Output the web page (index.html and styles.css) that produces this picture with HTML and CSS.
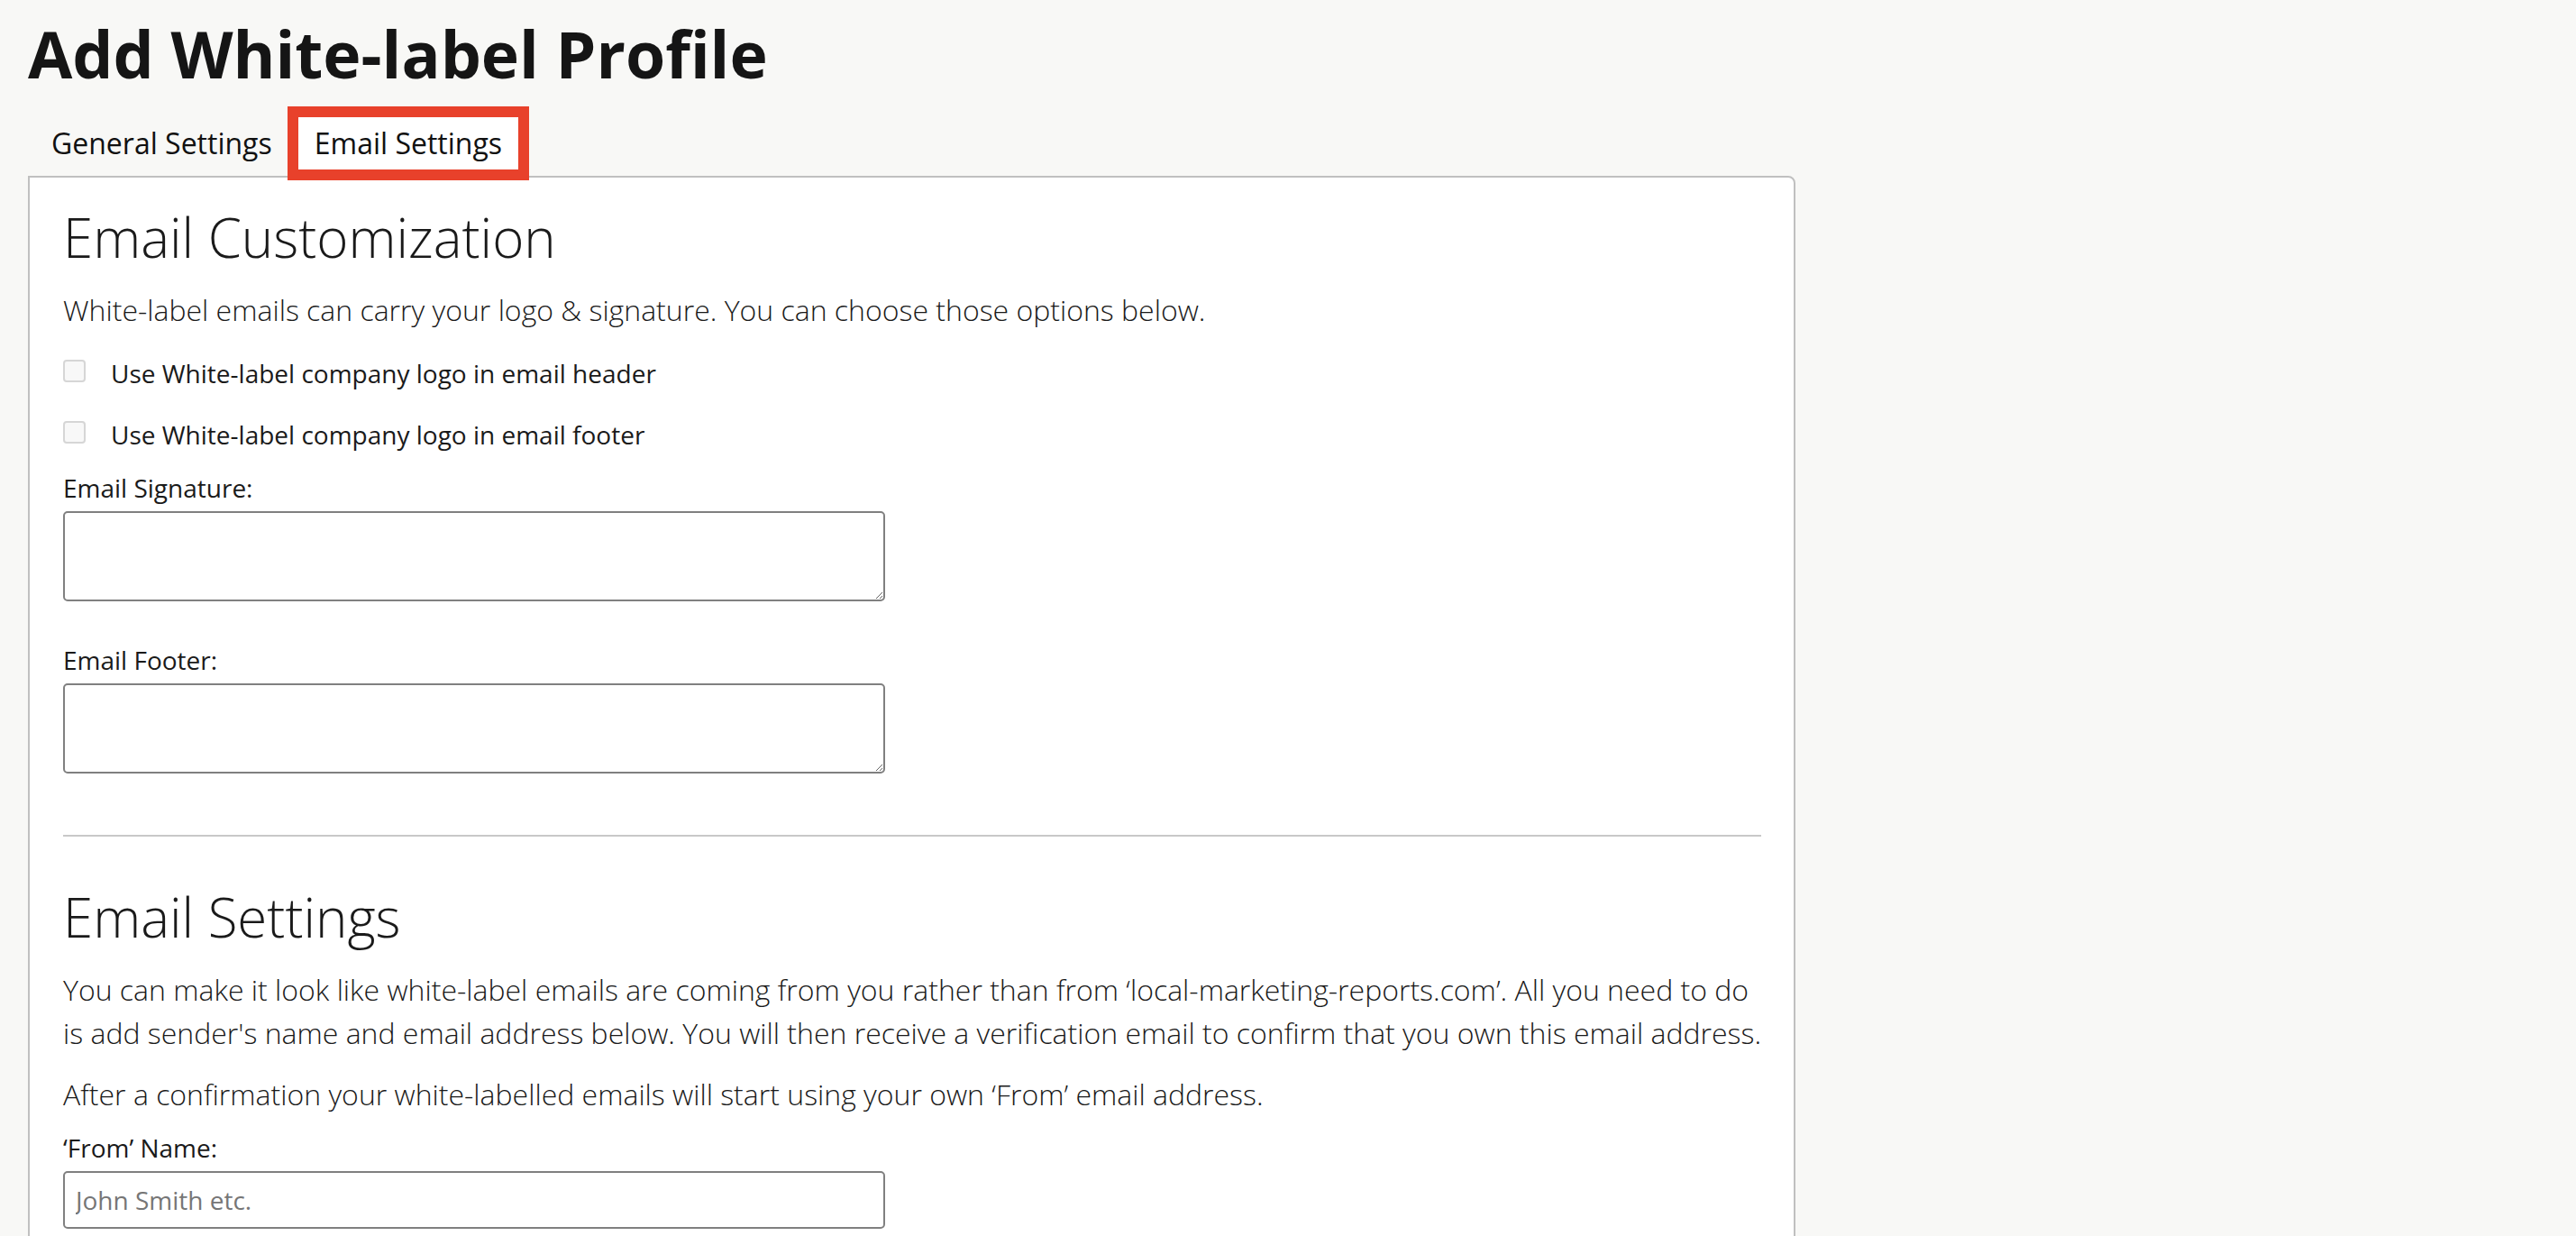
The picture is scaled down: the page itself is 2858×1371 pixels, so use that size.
FILE: index.html
```html
<!DOCTYPE html>
<html lang="en">
<head>
<meta charset="utf-8">
<title>Add White-label Profile</title>
<link rel="stylesheet" href="styles.css">
</head>
<body>
<div class="page">
  <h1 class="page-title">Add White-label Profile</h1>
  <div class="tabs">
    <div class="tab tab-plain">General Settings</div>
    <div class="tab tab-active">Email Settings</div>
  </div>
  <div class="card">
    <h2 class="section-title">Email Customization</h2>
    <p class="text">White-label emails can carry your logo &amp; signature. You can choose those options below.</p>
    <label class="check-row"><input type="checkbox" class="check"><span>Use White-label company logo in email header</span></label>
    <label class="check-row"><input type="checkbox" class="check"><span>Use White-label company logo in email footer</span></label>
    <div class="field field-first">
      <label class="field-label">Email Signature:</label>
      <textarea class="area"></textarea>
    </div>
    <div class="field field-next">
      <label class="field-label">Email Footer:</label>
      <textarea class="area"></textarea>
    </div>
    <hr class="divider">
    <h2 class="section-title">Email Settings</h2>
    <p class="text">You can make it look like white-label emails are coming from you rather than from ‘local-marketing-reports.com’. All you need to do is add sender's name and email address below. You will then receive a verification email to confirm that you own this email address.</p>
    <p class="text text-next">After a confirmation your white-labelled emails will start using your own ‘From’ email address.</p>
    <div class="field field-from">
      <label class="field-label">‘From’ Name:</label>
      <input class="input" type="text" placeholder="John Smith etc.">
    </div>
  </div>
</div>
</body>
</html>
```

FILE: styles.css
```css
html, body {
  margin: 0;
  padding: 0;
  background: #f8f8f6;
}
body {
  font-family: "Open Sans", "Liberation Sans", sans-serif;
  color: #1e1e1e;
}
.page {
  padding: 16px 0 0 31px;
}
.page-title {
  margin: 0;
  font-size: 71.5px;
  line-height: 88px;
  font-weight: 700;
  color: #151515;
}
.tabs {
  display: flex;
  margin-top: 14px;
  margin-bottom: -5px;
  position: relative;
  z-index: 1;
}
.tab {
  font-size: 32px;
  line-height: 58px;
  font-weight: 400;
  color: #111;
  border-top: 12px solid transparent;
  border-bottom: 12px solid transparent;
}
.tab-plain {
  padding: 0 17px 0 26px;
}
.tab-active {
  background: #fff;
  border: 12px solid #e8412b;
  padding: 0 18px;
}
.card {
  width: 1961px;
  box-sizing: border-box;
  background: #fff;
  border: 2px solid #c0c0c0;
  border-radius: 0 8px 0 0;
  padding: 33px 36px 120px 37px;
}
.section-title {
  margin: 0 0 24px;
  font-size: 60px;
  line-height: 66px;
  font-weight: 300;
  color: #1a1a1a;
}
.text {
  margin: 0;
  font-size: 32px;
  line-height: 48px;
  font-weight: 300;
  color: #1a1a1a;
}
.text-next {
  margin-top: 20px;
}
.check-row {
  display: flex;
  align-items: flex-start;
  font-size: 28px;
  line-height: 40px;
  font-weight: 400;
  color: #1a1a1a;
  margin-top: 26px;
}
.check-row + .check-row {
  margin-top: 28px;
}
.check {
  appearance: none;
  -webkit-appearance: none;
  width: 25px;
  height: 25px;
  margin: 5px 28px 0 0;
  box-sizing: border-box;
  border: 2px solid #d6d6d6;
  border-radius: 4px;
  background: #f8f8f8;
  flex: none;
}
.field-label {
  display: block;
  font-size: 28px;
  line-height: 40px;
  font-weight: 400;
  color: #1a1a1a;
  margin-bottom: 6px;
}
.field-first {
  margin-top: 19px;
}
.field-next {
  margin-top: 45px;
}
.field-from {
  margin-top: 15px;
}
.area {
  display: block;
  width: 912px;
  height: 100px;
  box-sizing: border-box;
  border: 2px solid #808080;
  border-radius: 5px;
  background: #fff;
  margin: 0;
  font-family: "Open Sans", sans-serif;
  font-size: 28px;
}
.input {
  display: block;
  width: 912px;
  height: 64px;
  box-sizing: border-box;
  border: 2px solid #808080;
  border-radius: 5px;
  background: #fff;
  margin: 0;
  padding: 0 12px;
  font-family: "Open Sans", sans-serif;
  font-size: 28px;
  color: #1a1a1a;
}
.input::placeholder {
  color: #767676;
}
.divider {
  border: 0;
  border-top: 2px solid #c8c8c8;
  margin: 68px 0 56px;
  height: 0;
}
```
